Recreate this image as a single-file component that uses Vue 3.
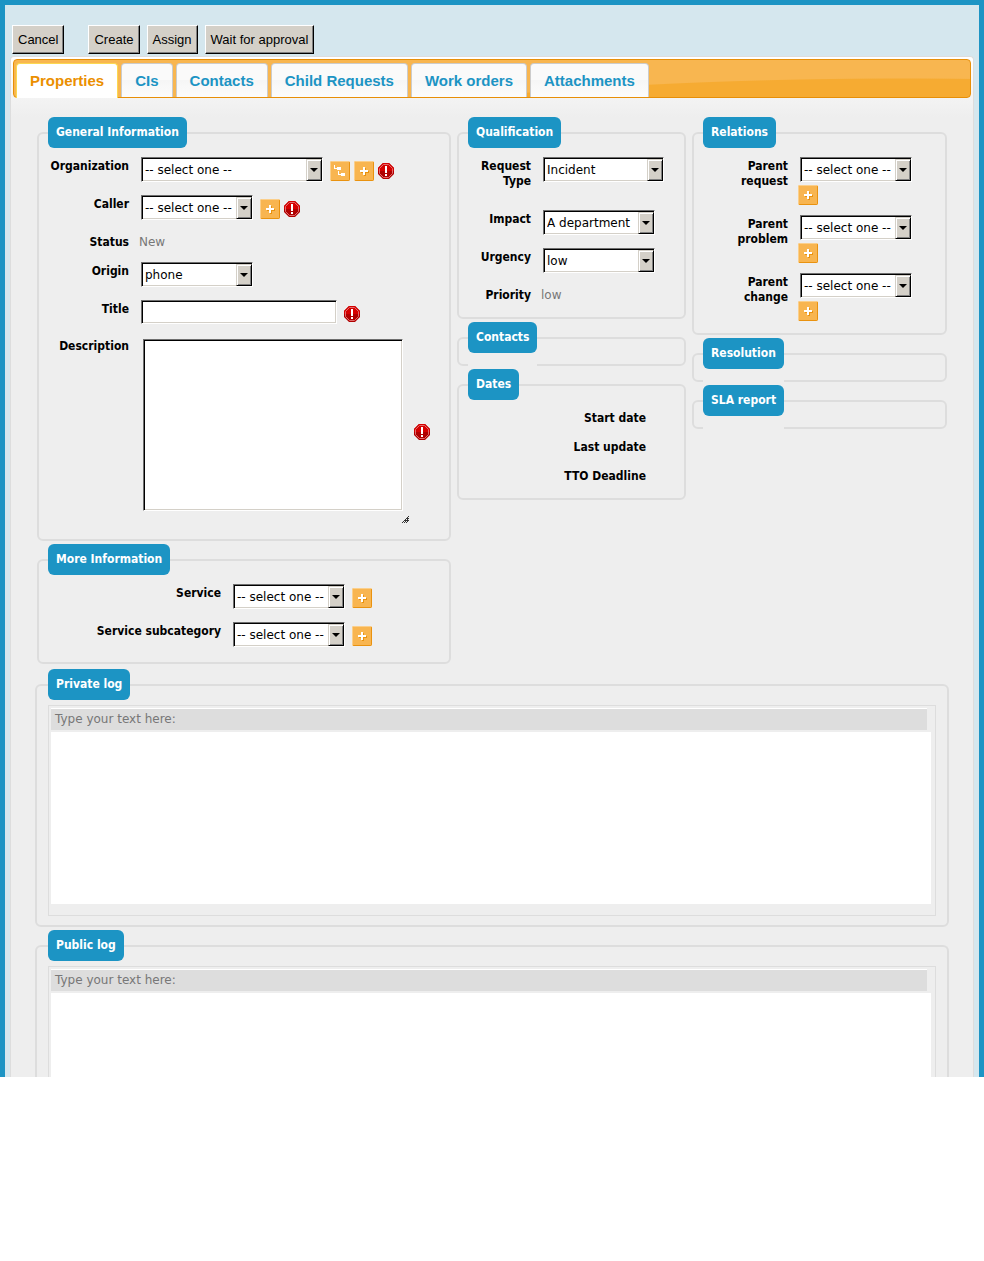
<template>
    <form class="page" @submit.prevent>

        <div class="toolbar">
            <button type="button" class="btn cancel">Cancel</button>
            <button v-for="action in actions" :key="action" type="submit" class="btn">{{ action }}</button>
        </div>

        <div class="panel">
            <nav class="tabs">
                <a
                    v-for="tab in tabs"
                    :key="tab"
                    href="#"
                    class="tab"
                    :class="{ active: tab == activeTab }"
                    @click.prevent="activeTab = tab">{{ tab }}</a>
            </nav>

            <div class="content">
                <div class="columns">
                    <div v-for="column in columns" :key="column[0].title" class="column">
                        <fieldset v-for="group in column" :key="group.title" :class="[group.kind, { empty: !group.fields.length }]">
                            <legend>{{ group.title }}</legend>

                            <div v-for="field in group.fields" :key="field.id" class="row" :class="'row-' + field.type">
                                <component :is="hasInput(field) ? 'label' : 'span'" class="label" :for="hasInput(field) ? field.id : null">{{ field.label }}</component>

                                <div class="field">
                                    <span v-if="field.type == 'select'" class="select" :class="field.size">
                                        <select :id="field.id" v-model="field.value">
                                            <option>{{ field.value }}</option>
                                        </select>
                                        <span class="arrow"></span>
                                    </span>
                                    <input v-else-if="field.type == 'text'" :id="field.id" type="text" class="box" v-model="field.value" />
                                    <div v-else-if="field.type == 'textarea'" class="resizable">
                                        <textarea :id="field.id" class="box" v-model="field.value"></textarea>
                                        <svg class="grip" width="8" height="8" viewBox="0 0 8 8" shape-rendering="crispEdges">
                                            <path d="M0 7.5h1M1 6.5h1M2 5.5h1M3 4.5h1M4 3.5h1M5 2.5h1M6 1.5h1M2 7.5h1M3 6.5h1M4 5.5h1M5 4.5h1M6 3.5h1M4 7.5h1M5 6.5h1M6 5.5h1M3 5.5h1M5 3.5h1M5 5.5h1" stroke="#333" />
                                        </svg>
                                    </div>
                                    <span v-else class="value">{{ field.value }}</span>

                                    <div v-if="field.tree || field.add || field.required" class="icons">
                                        <button v-if="field.tree" type="button" class="icon" aria-label="Browse">
                                            <svg width="20" height="20" viewBox="0 0 20 20" shape-rendering="crispEdges">
                                                <path d="M0 0h20v20H0z" fill="#f8b550" />
                                                <path d="M0 0h20v1H1v19H0z" fill="#fbcf8b" />
                                                <path d="M19 1h1v19H1v-1h18z" fill="#e9920f" />
                                                <path d="M4 4h1v3h2V6h4v3H7V8H4zM8 10h1v3h2v-1h4v3h-4v-1H8z" fill="#fff" />
                                            </svg>
                                        </button>
                                        <button v-if="field.add" type="button" class="icon" aria-label="Add">
                                            <svg width="20" height="20" viewBox="0 0 20 20" shape-rendering="crispEdges">
                                                <path d="M0 0h20v20H0z" fill="#f8b550" />
                                                <path d="M0 0h20v1H1v19H0z" fill="#fbcf8b" />
                                                <path d="M19 1h1v19H1v-1h18z" fill="#e9920f" />
                                                <path d="M10 7h2v3h3v2h-3v3h-2v-3H7v-2h3z" fill="#e9920f" />
                                                <path d="M9 6h2v3h3v2h-3v3H9v-3H6V9h3z" fill="#fff" />
                                            </svg>
                                        </button>
                                        <svg v-if="field.required" class="required" width="16" height="16" viewBox="0 0 16 16">
                                            <path d="M5 0h6l5 5v6l-5 5H5l-5-5V5z" fill="#b00000" />
                                            <path d="M5 0h6l5 5v3H0V5z" fill="#d60000" />
                                            <path d="M5.500 1.500h5l4 4v5l-4 4h-5l-4-4v-5z" fill="none" stroke="#e06c6c" />
                                            <path d="M7 3h2v7H7zM7 11h2v2H7z" fill="#fff" />
                                        </svg>
                                    </div>
                                </div>
                            </div>
                        </fieldset>
                    </div>
                </div>

                <fieldset v-for="log in logs" :key="log.id" class="log" :class="log.id">
                    <legend>{{ log.title }}</legend>
                    <div class="editor">
                        <label :for="log.id">Type your text here:</label>
                        <textarea :id="log.id" v-model="log.text"></textarea>
                    </div>
                </fieldset>
            </div>
        </div>
    </form>
</template>

<script setup>
    import { ref } from "vue";

    const actions = ['Create', 'Assign', 'Wait for approval'];
    const tabs = ['Properties', 'CIs', 'Contacts', 'Child Requests', 'Work orders', 'Attachments'];
    const activeTab = ref('Properties');

    const none = '-- select one --';

    const columns = ref([
        [
            {
                title: 'General Information',
                kind: 'general',
                fields: [
                    { id: 'org', label: 'Organization', type: 'select', value: none, size: 'large', tree: true, add: true, required: true },
                    { id: 'caller', label: 'Caller', type: 'select', value: none, add: true, required: true },
                    { id: 'status', label: 'Status', type: 'value', value: 'New' },
                    { id: 'origin', label: 'Origin', type: 'select', value: 'phone' },
                    { id: 'title', label: 'Title', type: 'text', value: '', required: true },
                    { id: 'description', label: 'Description', type: 'textarea', value: '', required: true }
                ]
            },
            {
                title: 'More Information',
                kind: 'more',
                fields: [
                    { id: 'service', label: 'Service', type: 'select', value: none, add: true },
                    { id: 'subcategory', label: 'Service subcategory', type: 'select', value: none, add: true }
                ]
            }
        ],
        [
            {
                title: 'Qualification',
                kind: 'qualification',
                fields: [
                    { id: 'request_type', label: 'Request Type', type: 'select', value: 'Incident', size: 'medium' },
                    { id: 'impact', label: 'Impact', type: 'select', value: 'A department' },
                    { id: 'urgency', label: 'Urgency', type: 'select', value: 'low' },
                    { id: 'priority', label: 'Priority', type: 'value', value: 'low' }
                ]
            },
            { title: 'Contacts', kind: 'contacts', fields: [] },
            {
                title: 'Dates',
                kind: 'dates',
                fields: [
                    { id: 'start_date', label: 'Start date', type: 'value', value: '' },
                    { id: 'last_update', label: 'Last update', type: 'value', value: '' },
                    { id: 'tto', label: 'TTO Deadline', type: 'value', value: '' }
                ]
            }
        ],
        [
            {
                title: 'Relations',
                kind: 'relations',
                fields: [
                    { id: 'parent_request', label: 'Parent request', type: 'select', value: none, add: true },
                    { id: 'parent_problem', label: 'Parent problem', type: 'select', value: none, add: true },
                    { id: 'parent_change', label: 'Parent change', type: 'select', value: none, add: true }
                ]
            },
            { title: 'Resolution', kind: 'resolution', fields: [] },
            { title: 'SLA report', kind: 'sla', fields: [] }
        ]
    ]);

    const logs = ref([
        { id: 'private_log', title: 'Private log', text: '' },
        { id: 'public_log', title: 'Public log', text: '' }
    ]);

    const hasInput = (field) => field.type != 'value';
</script>

<style>
    body {
        margin: 0;
        background: #fff;
    }
</style>

<style scoped>
* {
    box-sizing: border-box;
}
.page {
    border: 5px solid #1c94c4;
    border-bottom: 0;
    padding: 20px 5px 0;
    background: #d5e7ee;
    font: 12px/15px "DejaVu Sans", sans-serif;
    color: #000;
}
.toolbar {
    display: flex;
    gap: 7px;
    padding: 0 2px 2px;
}
.btn {
    height: 29px;
    padding: 0 5px;
    border: 1px solid;
    border-color: #fff #000 #000 #fff;
    box-shadow: inset -1px -1px #808080;
    background: #d4d0c8;
    font: 13px/15px "Liberation Sans", sans-serif;
    color: #000;
}
.cancel {
    margin-right: 17px;
}
.panel {
    border: 1px solid #ddd;
    border-bottom: 0;
    border-radius: 4px 4px 0 0;
    padding: 2px 2px 0;
    background: #eee linear-gradient(#fff, #eee 60px) no-repeat;
}
.tabs {
    display: flex;
    gap: 3px;
    height: 39px;
    padding: 3px 2px 0;
    border: 1px solid #e78f08;
    border-radius: 4px;
    background: radial-gradient(ellipse 733px 100px at 93% 118px, #f6ab32 99%, #f8b650 100%);
}
.tab {
    padding: 8px 13px 0;
    border: 1px solid #ccc;
    border-bottom: 0;
    border-radius: 4px 4px 0 0;
    background: linear-gradient(#fafafa 50%, #f6f6f6 50%, #fcfcfc);
    font: bold 15px/17px "Liberation Sans", sans-serif;
    color: #1c94c4;
    text-decoration: none;
    white-space: nowrap;
}
.tab.active {
    margin-bottom: -1px;
    border-color: #fbd850;
    background: #fff;
    color: #eb8f00;
}
.content {
    padding: 19px 22px 0;
}
.columns {
    display: grid;
    grid-template-columns: 414fr 229fr 255fr;
    gap: 6px;
    align-items: start;
    padding: 0 2px;
    margin-bottom: 5px;
}
.column {
    display: grid;
    gap: 3px;
}
fieldset {
    min-width: 0;
    margin: 0;
    padding: 4px 9px 7px;
    border: 2px solid #ddd;
    border-radius: 6px;
}
legend {
    position: relative;
    padding: 8px;
    border-radius: 6px;
    background: #1c94c4;
    color: #fff;
    font: bold 12px/15px "DejaVu Sans Condensed", "DejaVu Sans", sans-serif;
}
/* an empty group leaves its bottom line open below the title */
.empty legend::after {
    content: "";
    position: absolute;
    top: 31px;
    left: 0;
    right: 0;
    height: 13px;
    background: #eee;
}
.row {
    display: flex;
    gap: 10px;
}
.label {
    flex: none;
    padding: 7px 0;
    font: bold 12px/15px "DejaVu Sans Condensed", "DejaVu Sans", sans-serif;
    text-align: right;
}
.general .label {
    width: 81px;
}
.more .label {
    width: 173px;
}
.qualification .label {
    width: 63px;
}
.dates .label {
    width: 178px;
}
.relations .label {
    width: 85px;
    padding-left: 24px;
}
.qualification .label[for="request_type"] {
    padding-bottom: 16px;
}
.field {
    display: flex;
    align-items: flex-start;
    padding: 5px 0 8px;
}
.row-value .field {
    padding: 7px 0;
}
.value {
    color: #777;
}
.select {
    position: relative;
    width: 112px;
    height: 25px;
    margin-left: 2px;
}
.select.medium {
    width: 121px;
}
.select.large {
    width: 182px;
}
.select select,
.box {
    border: 1px solid;
    border-color: #6e6e6e #fff #fff #6e6e6e;
    border-radius: 0;
    box-shadow: inset 1px 1px #000, inset -1px -1px #d4d0c8;
    background: #fff;
    font: 12px/15px "DejaVu Sans", sans-serif;
    color: #000;
    outline: 0;
}
.select select {
    appearance: none;
    display: block;
    width: 100%;
    height: 25px;
    padding: 1px 18px 0 3px;
}
.arrow {
    position: absolute;
    top: 2px;
    right: 1px;
    width: 16px;
    height: 22px;
    border: 1px solid;
    border-color: #d4d0c8 #000 #000 #d4d0c8;
    box-shadow: inset 1px 1px #fff, inset -1px -1px #808080;
    background: #d4d0c8;
    pointer-events: none;
}
.arrow::after {
    content: "";
    position: absolute;
    top: 8px;
    left: 3px;
    border: 4px solid transparent;
    border-top-color: #000;
    border-bottom: 0;
}
input.box {
    width: 196px;
    height: 24px;
    margin-left: 2px;
    padding: 0 3px;
}
.resizable {
    width: 267px;
    height: 185px;
    margin: 2px 0 0 4px;
}
textarea.box {
    display: block;
    width: 260px;
    height: 172px;
    padding: 3px;
    resize: none;
}
.grip {
    display: block;
    margin: 4px 0 0 auto;
}
.icons {
    display: flex;
    gap: 4px;
    margin-left: 7px;
    padding-top: 4px;
}
.row-text .field {
    height: 37px;
}
.icon {
    width: 20px;
    height: 20px;
    padding: 0;
    border: 0;
    border-radius: 2px;
    overflow: hidden;
    background: none;
}
.icon svg {
    display: block;
}
.required {
    margin-top: 2px;
}
.relations .field {
    flex-direction: column;
    padding-bottom: 5px;
}
.relations .icons {
    margin-left: 0;
    padding-top: 3px;
}
.row-textarea .icons {
    align-self: center;
    margin-left: 4px;
    padding: 0;
}
.log {
    padding: 5px 11px 9px;
}
.log + .log {
    margin-top: 3px;
}
.editor {
    padding: 2px 4px 11px 2px;
    border: 1px solid #ddd;
}
.editor label {
    display: block;
    margin: 0 4px 2px 0;
    padding: 3px 4px;
    border-top: 1px solid #fff;
    background: #ddd;
    color: #777;
}
.editor textarea {
    display: block;
    width: 100%;
    height: 172px;
    padding: 4px;
    border: 0;
    background: #fff;
    font: 12px/15px "DejaVu Sans", sans-serif;
    outline: 0;
    resize: none;
}
/* the last log runs off the end of the page */
.public_log {
    padding-bottom: 0;
    border-bottom: 0;
    border-radius: 6px 6px 0 0;
}
.public_log .editor {
    padding-bottom: 0;
    border-bottom: 0;
}
.public_log textarea {
    height: 84px;
}
</style>
